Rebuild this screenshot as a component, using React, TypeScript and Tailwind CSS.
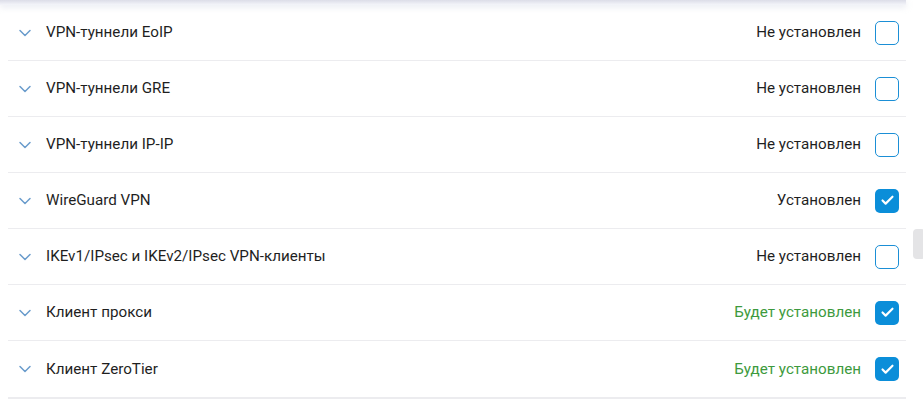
import { Check, ChevronDown } from "lucide-react";

type Item = { name: string; status: "none" | "installed" | "pending" };

const items: Item[] = [
  { name: "VPN-туннели EoIP", status: "none" },
  { name: "VPN-туннели GRE", status: "none" },
  { name: "VPN-туннели IP-IP", status: "none" },
  { name: "WireGuard VPN", status: "installed" },
  { name: "IKEv1/IPsec и IKEv2/IPsec VPN-клиенты", status: "none" },
  { name: "Клиент прокси", status: "pending" },
  { name: "Клиент ZeroTier", status: "pending" },
];

const labels = {
  none: "Не установлен",
  installed: "Установлен",
  pending: "Будет установлен",
};

export default function App() {
  return (
    <div className="relative h-[399px] w-[923px] overflow-hidden bg-white font-['Roboto',sans-serif]">
      {/* card edge above */}
      <div className="h-[5px] w-[906px] bg-gradient-to-b from-[#dcdde8] to-[#f4f5fa] shadow-[0_2px_6px_rgba(180,185,210,0.35)]" />

      <div className="ml-2 w-[898px]">
        {items.map((item, i) => (
          <div
            key={item.name}
            className={`flex h-[56px] items-center pr-[7px] ${i < items.length - 1 ? "border-b border-[#ececef]" : ""}`}
          >
            <ChevronDown className="ml-[7px] h-[20px] w-[20px] text-[#6a9ccc]" strokeWidth={1.8} />
            <span className="ml-[11px] text-[15.2px] text-[#1f1f1f]">{item.name}</span>
            <span
              className={`ml-auto text-[15.2px] ${item.status === "pending" ? "text-[#3d9a3d]" : "text-[#1f1f1f]"}`}
            >
              {labels[item.status]}
            </span>
            <div
              className={`ml-[14px] flex h-[24px] w-[24px] items-center justify-center rounded-[5px] ${
                item.status === "none" ? "border-[1.5px] border-[#1b8fd6] bg-white" : "bg-[#0b8ed9]"
              }`}
            >
              {item.status !== "none" && <Check className="h-[15px] w-[15px] text-white" strokeWidth={3.4} />}
            </div>
          </div>
        ))}
        <div className="h-[4px] bg-[#ececef]" />
      </div>

      {/* scrollbar thumb */}
      <div className="absolute left-[913px] top-[229px] h-[30px] w-[12px] rounded-[4px] bg-[#e4e4e6]" />
    </div>
  );
}
